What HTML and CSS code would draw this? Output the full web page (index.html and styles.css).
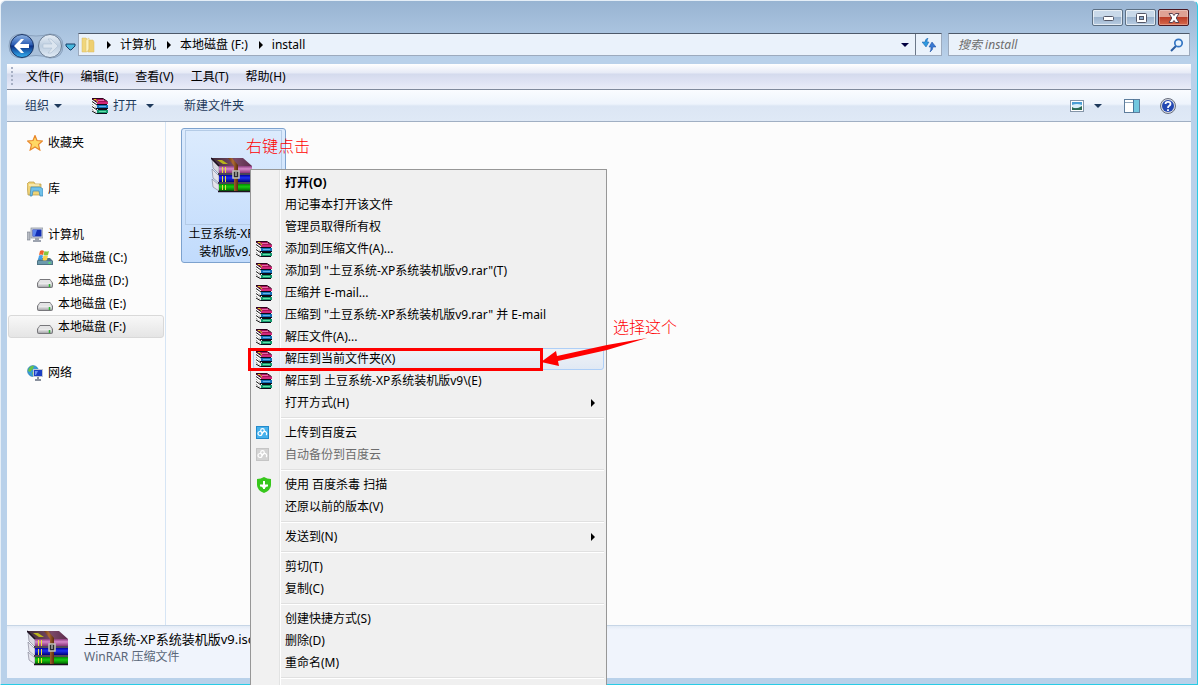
FILE: index.html
```html
<!DOCTYPE html>
<html lang="zh-CN">
<head>
    <meta charset="UTF-8">
    <meta name="viewport" content="width=device-width, initial-scale=1.0">
    <title>install</title>
    <link rel="stylesheet" href="styles.css">
</head>
<body>
    <!-- 图标 -->
    <svg class="symbols" aria-hidden="true">
        <defs>
            <linearGradient id="g-top" x1="0" y1="0" x2="1" y2="0">
                <stop offset="0" stop-color="#3d2a34"/><stop offset=".6" stop-color="#7a4a68"/><stop offset="1" stop-color="#5c2a4c"/>
            </linearGradient>
            <linearGradient id="g-purple" x1="0" y1="0" x2="0" y2="1">
                <stop offset="0" stop-color="#8a3c7c"/><stop offset=".4" stop-color="#d688c8"/><stop offset="1" stop-color="#8a3478"/>
            </linearGradient>
            <linearGradient id="g-blue" x1="0" y1="0" x2="0" y2="1">
                <stop offset="0" stop-color="#0000a0"/><stop offset=".4" stop-color="#2030f0"/><stop offset="1" stop-color="#000078"/>
            </linearGradient>
            <linearGradient id="g-green" x1="0" y1="0" x2="0" y2="1">
                <stop offset="0" stop-color="#008a00"/><stop offset=".4" stop-color="#18c810"/><stop offset="1" stop-color="#006400"/>
            </linearGradient>
            <linearGradient id="g-belt" x1="0" y1="0" x2="1" y2="0">
                <stop offset="0" stop-color="#6a3610"/><stop offset=".5" stop-color="#b06c34"/><stop offset="1" stop-color="#5c2c0c"/>
            </linearGradient>
            <linearGradient id="g-disk" x1="0" y1="0" x2="0" y2="1">
                <stop offset="0" stop-color="#f4f4f4"/><stop offset="1" stop-color="#a8a8ac"/>
            </linearGradient>
            <linearGradient id="g-back" x1="0" y1="0" x2="0" y2="1">
                <stop offset="0" stop-color="#8fb4e4"/><stop offset=".45" stop-color="#2a5cb4"/><stop offset=".5" stop-color="#0b2f86"/><stop offset="1" stop-color="#36b4f4"/>
            </linearGradient>
            <linearGradient id="g-fwd" x1="0" y1="0" x2="0" y2="1">
                <stop offset="0" stop-color="#e8eff7"/><stop offset=".5" stop-color="#bccddf"/><stop offset="1" stop-color="#e2ecf6"/>
            </linearGradient>
        </defs>
        <symbol id="rar-big" viewBox="0 0 42 36">
            <path d="M1 2L8 10V17L2 11Z" fill="#d8d8e0" stroke="#77778a" stroke-width=".6"/>
            <path d="M1 12L8 19V26L2 21Z" fill="#e4e4ec" stroke="#77778a" stroke-width=".6"/>
            <path d="M1 22L8 28V34L2 30Z" fill="#e4e4ec" stroke="#77778a" stroke-width=".6"/>
            <path d="M0 1H32L41 9H8Z" fill="url(#g-top)"/>
            <path d="M6 3H11L17 7H12Z" fill="#b8b41c"/>
            <rect x="8" y="9" width="33" height="7" fill="url(#g-purple)"/>
            <rect x="8" y="18" width="33" height="7" fill="url(#g-blue)"/>
            <rect x="8" y="27" width="33" height="7" fill="url(#g-green)"/>
            <path d="M0 1L8 9M7 17H41M7 26H41M7 34.500H41" stroke="#1c1020" stroke-width="1.500"/>
            <path d="M11.500 10V16M14.500 10V16M11.500 19V25M14.500 19V25M11.500 28V33M14.500 28V33" stroke="#ece03a"/>
            <path d="M17 1H21L27 8V34H23V9Z" fill="url(#g-belt)"/>
            <rect x="22" y="14" width="6" height="7" fill="#2c2c2c" stroke="#c4c4bc" stroke-width="1.500"/>
            <path d="M25 15V19" stroke="#e4e4e4"/>
        </symbol>
        <symbol id="rar" viewBox="0 0 16 16">
            <path d="M0 2L4 5V16L0 13Z" fill="#fff"/>
            <path d="M0 3.500L5 7M0 8.500L5 12M0 13L5 16" stroke="#111"/>
            <path d="M0 6L4 9.500M0 11L4 14.500" stroke="#777" stroke-dasharray="1 1"/>
            <path d="M0 1H11L16 4H5Z" fill="#a81058"/>
            <path d="M0 .5H11L15.500 3.500M0 1L5 4.500" stroke="#30041c" fill="none"/>
            <path d="M6 2.500H12" stroke="#e868a8"/>
            <path d="M2 1.500H4L6 4" stroke="#e0cc18" fill="none"/>
            <rect x="5" y="4" width="11" height="2" fill="#d02878"/>
            <rect x="5" y="7" width="11" height="3" fill="#1470b8"/>
            <rect x="5" y="12" width="11" height="3" fill="#14986c"/>
            <path d="M7 8.500H14" stroke="#60b4e8"/><path d="M7 13.500H14" stroke="#60e0a8"/>
            <path d="M5 6.500H15M4 10.500H16M6 11.500H15M5 15.500H15" stroke="#0b0b18"/>
        </symbol>
        <symbol id="disk" viewBox="0 0 16 16">
            <path d="M3 6H13L16 10V13Q16 15 14 15H2Q0 15 0 13V10Z" fill="#77777b"/>
            <path d="M3 7H13L15 10H1Z" fill="#e4e4e5"/>
            <rect x="1" y="10" width="14" height="4" rx="1" fill="url(#g-disk)"/>
            <path d="M12.500 11V14" stroke="#2eb434" stroke-width="1.500"/>
        </symbol>
    </svg>

    <div class="window">
        <header class="titlebar">
            <button class="caption" aria-label="最小化"><svg width="12" height="7" viewBox="0 0 12 7"><rect x="1.500" y="2.500" width="10" height="4" rx="1" fill="#fff" stroke="#535666"/></svg></button>
            <button class="caption" aria-label="最大化"><svg width="12" height="10" viewBox="0 0 12 10"><rect x="1.500" y=".5" width="10" height="9" rx="1" fill="#fff" stroke="#535666"/><rect x="4.500" y="3.500" width="4" height="3" fill="#8aa9c8" stroke="#535666"/></svg></button>
            <button class="caption close" aria-label="关闭"><svg width="12" height="10" viewBox="0 0 12 10"><path d="M1 .5H4.500L6 2.500L7.500 .5H11L8.200 5L11 9.500H7.500L6 7.500L4.500 9.500H1L3.800 5Z" fill="#fff" stroke="#5b4250"/></svg></button>
        </header>

        <nav class="navbar">
            <div class="history">
                <svg width="68" height="26" viewBox="0 0 68 26">
                    <path d="M14 1Q28 5 42 1Q55 1 55 13Q55 25 42 25Q28 20 14 25Q1 25 1 13Q1 1 14 1" fill="#a9c0da" stroke="#8aa2be"/>
                    <circle cx="14" cy="13" r="11.500" fill="url(#g-back)" stroke="#1b3565"/>
                    <circle cx="42" cy="13" r="11.500" fill="url(#g-fwd)" stroke="#6b7e95"/>
                    <path d="M6 13L13 6H16L12 11H21V15H12L16 20H13Z" fill="#fff"/>
                    <path d="M50 13L43 6H40L44 11H35V15H44L40 20H43Z" fill="#dbe5ef" stroke="#a6b8cc" stroke-width=".5"/>
                    <path d="M58 11H67V13L63 17H62L58 13Z" fill="#48b7dd" stroke="#173f68"/>
                </svg>
            </div>
            <div class="address">
                <svg width="16" height="16" viewBox="0 0 16 16"><path d="M2 1H6L8 3V14L6 15H2Z" fill="#f0d67c" stroke="#d8b860" stroke-width=".5"/><path d="M6 3L9 1V13L6 15Z" fill="#fcf2c0" stroke="#dcc070" stroke-width=".5"/><path d="M9 3H13L14 5V15H8L9 12Z" fill="#eecf70" stroke="#d8b860" stroke-width=".5"/></svg>
                <i class="arrow"></i><a href="#">计算机</a>
                <i class="arrow"></i><a href="#">本地磁盘 (F:)</a>
                <i class="arrow"></i><a href="#">install</a>
                <button class="drop" aria-label="以前的位置"><i class="caret"></i></button>
                <button class="refresh" aria-label="刷新"><svg width="14" height="14" viewBox="0 0 14 14"><path d="M6 0Q3 1 3 4H0L4 9L7 4H5Q5 2 6 0Z" fill="#2f9ae0" stroke="#1b5ca8" stroke-width=".5"/><path d="M8 14Q11 12 11 9H14L10 4L7 9H9Q9 12 8 14Z" fill="#3979d3" stroke="#1b4a9c" stroke-width=".5"/></svg></button>
            </div>
            <label class="search">
                <input type="text" placeholder="搜索 install" aria-label="搜索">
                <svg width="14" height="14" viewBox="0 0 14 14"><path d="M6 8L1 13" stroke="#2a5c9f" stroke-width="2"/><circle cx="8.500" cy="5" r="3.700" fill="#e9f4fd" stroke="#3576c3" stroke-width="1.700"/></svg>
            </label>
        </nav>

        <div class="menubar">
            <button>文件(F)</button>
            <button>编辑(E)</button>
            <button>查看(V)</button>
            <button>工具(T)</button>
            <button>帮助(H)</button>
        </div>

        <div class="toolbar">
            <button>组织<i class="caret"></i></button>
            <button class="open"><svg width="16" height="16"><use href="#rar"/></svg>打开<i class="caret"></i></button>
            <button>新建文件夹</button>
            <div class="views">
                <button aria-label="更改视图"><svg width="14" height="12" viewBox="0 0 14 12"><rect x=".5" y=".5" width="13" height="11" fill="#fff" stroke="#8495a8"/><rect x="2" y="2" width="10" height="8" fill="#4a9ed5"/><path d="M2 5Q7 3 12 5V8H2Z" fill="#d9effa"/><path d="M2 7Q6 10 12 6V10H2Z" fill="#2d6b54"/></svg><i class="caret"></i></button>
                <button aria-label="显示预览窗格"><svg width="16" height="14" viewBox="0 0 16 14"><rect x=".5" y=".5" width="15" height="13" fill="#fff" stroke="#5e7d9c"/><path d="M1 3.500H9" stroke="#91a8be"/><rect x="10" y="1" width="5" height="12" fill="#72c7df"/><path d="M9.500 0V14" stroke="#47779c"/></svg></button>
                <button aria-label="帮助"><svg width="16" height="16" viewBox="0 0 16 16"><circle cx="8" cy="8" r="7.500" fill="#d5d9e2" stroke="#696f7e"/><circle cx="8" cy="8" r="6" fill="#2448b2"/><path d="M5.500 6Q5.500 3.800 8 3.800Q10.500 3.800 10.500 6Q10.500 7 9 8Q8 8.500 8 10M8 11.300V13" fill="none" stroke="#fff" stroke-width="1.800"/></svg></button>
            </div>
        </div>

        <main class="content">
            <aside class="sidebar">
                <a href="#"><svg width="16" height="16" viewBox="0 0 16 16"><path d="M8 .5L10 5.500L15.500 6L11.500 9.500L12.800 15L8 12L3.200 15L4.500 9.500L.5 6L6 5.500Z" fill="#ffd864" stroke="#e8872c" stroke-width="1.200"/></svg>收藏夹</a>
                <a href="#" class="group"><svg width="16" height="16" viewBox="0 0 16 16"><path d="M0 3L2 1H7L8 3H14V14H1Z" fill="#f0d377" stroke="#b8983f" stroke-width=".7"/><path d="M2 4H12" stroke="#fffbe1"/><path d="M4 6H13L16 8V15H13L12 10H6L5 15H3Z" fill="#6fc1ea" stroke="#3d86b4" stroke-width=".7"/></svg>库</a>
                <a href="#" class="group"><svg width="16" height="16" viewBox="0 0 16 16"><rect x="0" y="5" width="3" height="8" fill="#b8bcc4" stroke="#747a87" stroke-width=".6"/><rect x="4" y="1" width="12" height="10" fill="#d2d6dc" stroke="#818994" stroke-width=".7"/><rect x="5.500" y="2.500" width="9" height="7" fill="#132fb4"/><path d="M6 3H10L8 9H6Z" fill="#5a83ec"/><path d="M8 11H12V13H14V15H6V13H8Z" fill="#9da3af"/></svg>计算机</a>
                <a href="#" class="disk"><svg width="16" height="16" viewBox="0 0 16 16"><path d="M2 8H13L16 11V15H0V11Z" fill="#4f7484"/><path d="M1 11H15V14H1Z" fill="#6c9aad"/><path d="M12.500 12V14" stroke="#59e06b" stroke-width="2"/><path d="M3 1Q5 -.5 7 1L6 5Q4 4 2 5Z" fill="#f0622b"/><path d="M7.500 1Q10 2 12 1L11 5Q9 6 6.500 5Z" fill="#89c53d"/><path d="M2 5.500Q4 4.500 6 5.500L5 10Q3 9 1 10Z" fill="#409ee8"/><path d="M6.500 5.500Q9 6.500 11 5.500L10 10Q8 11 5.500 10Z" fill="#fbd148"/></svg>本地磁盘 (C:)</a>
                <a href="#" class="disk"><svg width="16" height="16"><use href="#disk"/></svg>本地磁盘 (D:)</a>
                <a href="#" class="disk"><svg width="16" height="16"><use href="#disk"/></svg>本地磁盘 (E:)</a>
                <a href="#" class="disk selected"><svg width="16" height="16"><use href="#disk"/></svg>本地磁盘 (F:)</a>
                <a href="#" class="group"><svg width="16" height="16" viewBox="0 0 16 16"><circle cx="6" cy="6" r="5.500" fill="#369bd9" stroke="#1c6ea2" stroke-width=".5"/><path d="M2 3Q5 0 7 1L6 4L3 7L1 6Z M5 7L8 8L6 11Z" fill="#67c347"/><rect x="6.500" y="4.500" width="9" height="7" fill="#1b3fc3" stroke="#c0c7d2"/><path d="M8 6H11L9 10H8Z" fill="#6c92f0"/><path d="M10 12H12V14H14V16H8V14H10Z" fill="#89909d"/></svg>网络</a>
            </aside>
            <section class="files">
                <button class="file">
                    <span class="thumb"><svg width="42" height="36"><use href="#rar-big"/></svg></span>
                    <span>土豆系统-XP系统<br>装机版v9.iso</span>
                </button>
            </section>
        </main>

        <footer class="details">
            <svg width="42" height="36"><use href="#rar-big"/></svg>
            <div>
                <div class="details-name">土豆系统-XP系统装机版v9.iso</div>
                <div class="details-type">WinRAR 压缩文件</div>
            </div>
        </footer>
    </div>

    <!-- 右键菜单 -->
    <div class="context-menu">
        <button class="default">打开(O)</button>
        <button>用记事本打开该文件</button>
        <button>管理员取得所有权</button>
        <button><svg width="16" height="16"><use href="#rar"/></svg>添加到压缩文件(A)...</button>
        <button><svg width="16" height="16"><use href="#rar"/></svg>添加到 "土豆系统-XP系统装机版v9.rar"(T)</button>
        <button><svg width="16" height="16"><use href="#rar"/></svg>压缩并 E-mail...</button>
        <button><svg width="16" height="16"><use href="#rar"/></svg>压缩到 "土豆系统-XP系统装机版v9.rar" 并 E-mail</button>
        <button><svg width="16" height="16"><use href="#rar"/></svg>解压文件(A)...</button>
        <button class="active"><svg width="16" height="16"><use href="#rar"/></svg>解压到当前文件夹(X)</button>
        <button><svg width="16" height="16"><use href="#rar"/></svg>解压到 土豆系统-XP系统装机版v9\(E)</button>
        <button>打开方式(H)<i class="arrow"></i></button>
        <hr>
        <button><svg width="16" height="16" viewBox="0 0 16 16"><rect x=".5" y="1.500" width="12" height="12" fill="#47b1ec" stroke="#238bcb"/><g fill="none" stroke="#fff" stroke-width="1.200"><circle cx="4" cy="8.500" r="2"/><circle cx="6.500" cy="5.500" r="1.800"/><path d="M6 9Q8 5 10 7Q11.500 9 10 10"/></g></svg>上传到百度云</button>
        <button disabled><svg width="16" height="16" viewBox="0 0 16 16"><rect x=".5" y="1.500" width="12" height="12" fill="#d3d3d3" stroke="#c5c5c5"/><g fill="none" stroke="#fff" stroke-width="1.200"><circle cx="4" cy="8.500" r="2"/><circle cx="6.500" cy="5.500" r="1.800"/><path d="M6 9Q8 5 10 7Q11.500 9 10 10"/></g></svg>自动备份到百度云</button>
        <hr>
        <button><svg width="16" height="16" viewBox="0 0 16 16"><path d="M8 0Q11 2 15 2V8Q15 13 8 16Q1 13 1 8V2Q5 2 8 0Z" fill="#37c71c"/><path d="M8 4V12M4 8.500H12" stroke="#fff" stroke-width="2"/><path d="M5 9H11L8 12Z" fill="#fff"/></svg>使用 百度杀毒 扫描</button>
        <button>还原以前的版本(V)</button>
        <hr>
        <button>发送到(N)<i class="arrow"></i></button>
        <hr>
        <button>剪切(T)</button>
        <button>复制(C)</button>
        <hr>
        <button>创建快捷方式(S)</button>
        <button>删除(D)</button>
        <button>重命名(M)</button>
        <hr>
    </div>

    <!-- 标注 -->
    <div class="note note-click">右键点击</div>
    <div class="note note-choose">选择这个</div>
    <div class="mark"></div>
    <svg class="pointer" width="106" height="30" viewBox="0 0 106 30"><path d="M0 25L15 14L16 19L66 8L106 1L66 13L17 24L18 29Z" fill="#f00"/></svg>
</body>
</html>
```
FILE: styles.css
```css
* {
    box-sizing: border-box;
}
body {
    position: relative;
    height: 100vh;
    margin: 0;
    overflow: hidden;
    font-family: "Noto Sans", "Noto Sans CJK SC", sans-serif;
    font-size: 12px;
    line-height: 16px;
    color: #000;
}
button {
    display: flex;
    align-items: center;
    margin: 0;
    padding: 0;
    border: none;
    background: none;
    font: inherit;
    color: inherit;
    white-space: nowrap;
}
a {
    color: inherit;
    text-decoration: none;
}
svg {
    flex: none;
}
.symbols {
    position: absolute;
    width: 0;
    height: 0;
}
.arrow {
    border: 4px solid transparent;
    border-left-color: #000;
    border-right: none;
}
.caret {
    border: 4px solid transparent;
    border-top-color: #1e395b;
    border-bottom: none;
}

/* 窗口 */
.window {
    display: flex;
    flex-direction: column;
    height: 100vh;
    padding: 0 6px 6px;
    border: 1px solid #29cbe5;
    border-top-color: #e5eef7;
    border-left-color: #e5eef7;
    border-radius: 6px 6px 0 0;
    background: linear-gradient(#98b4d2, #b9d1ea 58px);
}
.titlebar {
    display: flex;
    justify-content: flex-end;
    gap: 2px;
    height: 32px;
    padding: 8px 2px 0 0;
}
.caption {
    justify-content: center;
    width: 31px;
    height: 17px;
    border: 1px solid #5d7084;
    border-radius: 2px;
    background: linear-gradient(#c9d9e9 45%, #9bb3cd 50%, #b9cde3);
    box-shadow: inset 0 0 0 1px rgba(255, 255, 255, 0.6);
}
.close {
    border-color: #4c1922;
    background: linear-gradient(#dfa194 45%, #bb3d28 50%, #d7694c);
    box-shadow: inset 0 0 0 1px rgba(255, 255, 255, 0.3);
}
.navbar {
    display: flex;
    height: 31px;
    padding: 0 1px;
}
.history {
    width: 70px;
}
.history svg {
    display: block;
}
.address, .search {
    display: flex;
    align-items: center;
    height: 23px;
    border: 1px solid #9caabd;
    border-top-color: #4d596a;
    background: #eaf2fb;
}
.address {
    flex: 1;
    gap: 8px;
    margin-right: 6px;
    padding-left: 1px;
}
.address .arrow {
    margin: 0 1px 0 3px;
}
.drop {
    margin-left: auto;
}
.drop .caret {
    border-top-color: #000040;
}
.refresh {
    justify-content: center;
    width: 26px;
    height: 21px;
    margin-left: -2px;
    border-left: 1px solid #6b7889;
}
.search {
    width: 242px;
    padding: 0 5px 0 9px;
}
.search input {
    flex: 1;
    min-width: 0;
    padding: 0;
    border: none;
    outline: none;
    background: none;
    font: inherit;
    font-style: italic;
}
.search input::placeholder {
    color: #6d6d6d;
    opacity: 1;
}
.menubar {
    display: flex;
    gap: 17px;
    height: 26px;
    padding: 0 18px;
    border-bottom: 1px solid #7f899c;
    background: linear-gradient(#fff, #e6eaf6 9px, #d4daed 10px, #dfe3f4 18px, #e9ecf8);
}
.menubar::before {
    content: "";
    width: 2px;
    margin: 3px -4px 2px -14px;
    background: repeating-linear-gradient(#a7b0c4 0 2px, transparent 2px 4px);
}
.toolbar {
    display: flex;
    gap: 30px;
    height: 32px;
    padding: 0 15px 0 18px;
    border-bottom: 1px solid #a0afc3;
    background: linear-gradient(#fafcff, #eef4fc 14px, #dce6f4 16px, #dfe9f6);
    color: #1e395b;
}
.toolbar button {
    gap: 5px;
}
.toolbar .open .caret {
    margin-left: 4px;
}
.views {
    display: flex;
    gap: 20px;
    margin-left: auto;
}
.views .caret {
    margin: 0 2px 0 5px;
}

/* 内容 */
.content {
    display: flex;
    flex: 1;
    background: #fcfcfc;
}
.sidebar {
    width: 159px;
    padding: 9px 1px 0;
    border-right: 1px solid #d6e5f5;
}
.sidebar a {
    display: flex;
    align-items: center;
    gap: 5px;
    height: 23px;
    padding-left: 19px;
}
.sidebar .group {
    margin-top: 23px;
}
.sidebar .disk {
    padding-left: 28px;
    border: 1px solid transparent;
    border-radius: 3px;
}
.sidebar .selected {
    border-color: #d9d9d9;
    background: linear-gradient(#f8f8f8, #e5e5e5);
}
.files {
    padding: 6px 15px;
}
.file {
    flex-direction: column;
    width: 105px;
    height: 135px;
    padding: 1px 3px;
    border: 1px solid #7da2ce;
    border-radius: 3px;
    background: linear-gradient(#dcebfd, #c1dbfc);
    line-height: 18px;
}
.thumb {
    display: flex;
    justify-content: center;
    align-self: stretch;
    height: 97px;
    padding: 26px 3px 0 0;
    border: 1px solid #b4cbe6;
}
.details {
    display: flex;
    gap: 15px;
    height: 53px;
    padding: 4px 20px;
    border-top: 1px solid #c6d5e6;
    background: linear-gradient(#e3ebf5, #f0f4fc 4px);
    line-height: 18px;
}
.details-name {
    font-size: 13px;
}
.details-type {
    color: #5a6779;
}

/* 右键菜单 */
.context-menu {
    position: absolute;
    top: 169px;
    left: 250px;
    width: 357px;
    padding: 2px 2px 30px;
    border: 1px solid #979797;
    background: linear-gradient(90deg, #f1f1f1 28px, #e2e3e3 28px 29px, #fff 29px 30px, #f0f0f0 30px);
}
.context-menu button {
    width: 100%;
    height: 22px;
    padding-left: 31px;
    border: 1px solid transparent;
    border-radius: 3px;
}
.context-menu svg {
    margin: 0 13px 0 -29px;
}
.context-menu .default {
    font-weight: bold;
}
.context-menu .active {
    border-color: #aecff7;
    background: linear-gradient(rgba(240, 244, 250, 0.6), rgba(218, 230, 246, 0.7));
}
.context-menu button:disabled {
    color: #6d6d6d;
}
.context-menu .arrow {
    margin: 0 8px 0 auto;
}
.context-menu hr {
    height: 2px;
    margin: 3px 0 3px 28px;
    border: none;
    border-top: 1px solid #e0e0e0;
    border-bottom: 1px solid #fff;
}

/* 标注 */
.note {
    position: absolute;
    color: #f00;
    font-family: "Noto Sans CJK SC", sans-serif;
    font-size: 16px;
    font-weight: 300;
    line-height: 20px;
}
.note-click {
    top: 135px;
    left: 246px;
}
.note-choose {
    top: 316px;
    left: 613px;
}
.mark {
    position: absolute;
    top: 348px;
    left: 248px;
    width: 295px;
    height: 23px;
    border: 3px solid #f00;
}
.pointer {
    position: absolute;
    top: 337px;
    left: 541px;
}
```
